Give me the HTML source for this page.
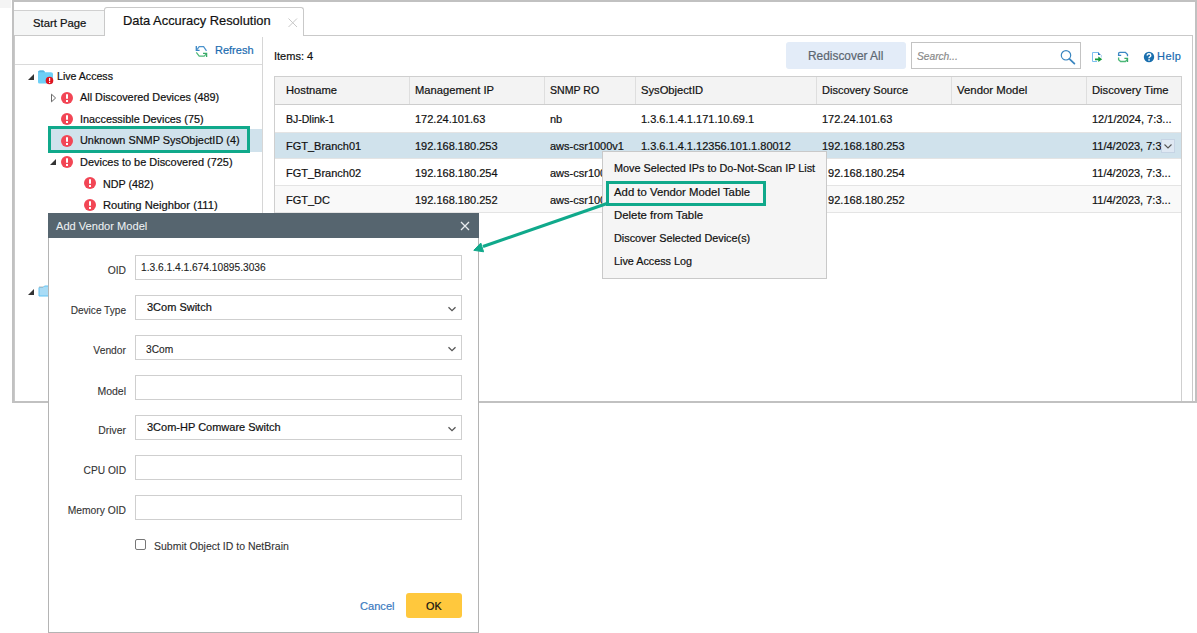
<!DOCTYPE html>
<html><head><meta charset="utf-8">
<style>
*{box-sizing:border-box;margin:0;padding:0}
html,body{width:1197px;height:633px;overflow:hidden;background:#fff}
body{position:relative;font-family:"Liberation Sans",sans-serif;font-size:11px;color:#111}
.a{position:absolute}
.t{position:absolute;white-space:nowrap;line-height:1;-webkit-text-stroke-width:0.2px}
.ex{position:absolute;width:12px;height:12px;border-radius:50%;background:#f24655}
.ex:before{content:"";position:absolute;left:5px;top:2px;width:2px;height:5px;background:#fff;border-radius:1px}
.ex:after{content:"";position:absolute;left:5px;top:8px;width:2px;height:2px;background:#fff}
.cd{position:absolute;top:77px;width:1px;height:27px;background:#dedede}
.rd{position:absolute;width:1px;height:27px;background:#efefef}
.hl{position:absolute;left:275px;width:906px;height:1px;background:#e4e4e4}
</style></head><body>
<div class="a" style="left:0;top:0;width:11px;height:8px;background:#f4f4f4"></div>
<!-- outer frame -->
<div class="a" style="left:12px;top:0;width:1185px;height:403px;border:2px solid #c1c1c1;background:#fff"></div>
<div class="a" style="left:14px;top:35px;width:1179px;height:1px;background:#c9c9c9"></div>
<div class="a" style="left:1192px;top:35px;width:1px;height:366px;background:#c9c9c9"></div>
<div class="a" style="left:14px;top:35px;width:1px;height:366px;background:#c9c9c9"></div>
<!-- tabs -->
<div class="a" style="left:14px;top:10px;width:90px;height:25px;background:#f5f6f6;border-top:1px solid #d0d0d0"></div>
<div class="t" style="left:33px;top:18px;font-size:11.3px;color:#111">Start Page</div>
<div class="a" style="left:104px;top:7px;width:200px;height:29px;background:#fff;border:1px solid #c9c9c9;border-bottom:none;border-radius:3px 3px 0 0"></div>
<div class="t" style="left:123px;top:15px;font-size:12.9px;color:#111">Data Accuracy Resolution</div>
<svg class="a" style="left:287px;top:17px" width="11" height="11" viewBox="0 0 11 11"><path d="M1.5 1.5L10 10M10 1.5L1.5 10" stroke="#c8c8c8" stroke-width="1"/></svg>

<!-- left panel -->
<div class="a" style="left:262px;top:37px;width:1px;height:364px;background:#d6d6d6"></div>
<div class="a" style="left:15px;top:64px;width:247px;height:1px;background:#dadada"></div>
<svg class="a" style="left:192px;top:42px" width="20" height="18" viewBox="0 0 20 18">
<path d="M4.3 4V8.3H7.6" fill="none" stroke="#3b86c4" stroke-width="1.3"/>
<path d="M5 7.6L7.2 4.6H11.6L14.5 8.9" fill="none" stroke="#4a92cc" stroke-width="1.2"/>
<path d="M4.3 10.4L7.2 14.1H12.2L14.5 11.6" fill="none" stroke="#4cb878" stroke-width="1.2"/>
<path d="M11 11.3H14.6V14.9" fill="none" stroke="#3aaa68" stroke-width="1.3"/>
</svg>
<div class="t" style="left:215px;top:45px;font-size:11px;color:#1a6bb0">Refresh</div>

<!-- tree -->
<svg class="a" style="left:28px;top:74px" width="6" height="6" viewBox="0 0 6 6"><path d="M6 0V6H0Z" fill="#333"/></svg>
<svg class="a" style="left:37px;top:69px" width="18" height="16" viewBox="0 0 18 16">
<path d="M1 3.5Q1 1.5 3 1.5H6Q7 1.5 7.5 2.5L8 3.2H14Q16 3.2 16 5V13Q16 14.5 14.5 14.5H2.5Q1 14.5 1 13Z" fill="#6dcff6"/>
<path d="M1 3.5Q1 1.5 3 1.5H6Q7 1.5 7.5 2.5L8 3.2H1Z" fill="#58b6e0"/>
<circle cx="12.5" cy="11.5" r="3.8" fill="#e0141e"/>
<rect x="12" y="9" width="1.2" height="3.2" fill="#fff"/>
<rect x="12" y="13" width="1.2" height="1" fill="#fff"/>
</svg>
<div class="t" style="left:57px;top:71px;font-size:10.6px">Live Access</div>

<svg class="a" style="left:50px;top:93px" width="8" height="10" viewBox="0 0 8 10"><path d="M1.5 1.2L5.6 5L1.5 8.8Z" fill="none" stroke="#6a6a6a" stroke-width="1" stroke-linejoin="miter"/></svg>
<div class="ex" style="left:61px;top:92px"></div>
<div class="t" style="left:80px;top:92px;font-size:10.85px">All Discovered Devices (489)</div>

<div class="ex" style="left:61px;top:113px"></div>
<div class="t" style="left:80px;top:114px;font-size:10.85px">Inaccessible Devices (75)</div>

<div class="a" style="left:48px;top:129px;width:214px;height:23px;background:#d0e2ec"></div>
<div class="ex" style="left:61px;top:135px"></div>
<div class="t" style="left:80px;top:135px;font-size:10.9px">Unknown SNMP SysObjectID (4)</div>

<svg class="a" style="left:50px;top:159px" width="6" height="6" viewBox="0 0 6 6"><path d="M6 0V6H0Z" fill="#333"/></svg>
<div class="ex" style="left:61px;top:156px"></div>
<div class="t" style="left:80px;top:157px;font-size:10.95px">Devices to be Discovered (725)</div>

<div class="ex" style="left:84px;top:177px"></div>
<div class="t" style="left:103px;top:179px;font-size:10.75px">NDP (482)</div>

<div class="ex" style="left:84px;top:199px"></div>
<div class="t" style="left:103px;top:200px;font-size:11.2px">Routing Neighbor (111)</div>

<svg class="a" style="left:28px;top:289px" width="6" height="6" viewBox="0 0 6 6"><path d="M6 0V6H0Z" fill="#333"/></svg>
<svg class="a" style="left:38px;top:285px" width="12" height="12" viewBox="0 0 12 12"><path d="M1 2.5H5L6.5 1H11V11H1Z" fill="#a9dcf6" stroke="#62c3f2" stroke-width="1"/><path d="M1 2.5H5L6 1.5H1Z" fill="#bbb"/></svg>

<!-- right toolbar -->
<div class="t" style="left:274px;top:51px;font-size:11px">Items: 4</div>
<div class="a" style="left:786px;top:42px;width:120px;height:27px;background:#e3ecf8;border-radius:3px"></div>
<div class="t" style="left:808px;top:51px;font-size:11.9px;color:#5c6670">Rediscover All</div>
<div class="a" style="left:911px;top:42px;width:170px;height:27px;border:1px solid #c3c3c3;background:#fff"></div>
<div class="t" style="left:917px;top:52px;font-size:10.2px;font-style:italic;color:#8a8a8a">Search...</div>
<svg class="a" style="left:1059px;top:48px" width="18" height="18" viewBox="0 0 18 18"><circle cx="7" cy="7.3" r="4.7" fill="none" stroke="#3a86c0" stroke-width="1.2"/><path d="M10.4 10.8L15.4 15.6" stroke="#3a86c0" stroke-width="1.8" stroke-linecap="round"/></svg>
<svg class="a" style="left:1086px;top:46px" width="22" height="20" viewBox="0 0 22 20"><path d="M12.5 6.5H6.5V15.5H11" fill="none" stroke="#7cbef0" stroke-width="1"/><path d="M12 6L14.9 8.9H12Z" fill="#2a74c0"/><path d="M15.3 9V11.5" stroke="#9ccaf0" stroke-width="0.9"/><path d="M9 12.4H12.3V10.6L16.2 13.3L12.3 16V14.2H9Z" fill="#159a3e"/></svg>
<svg class="a" style="left:1112px;top:48px" width="20" height="18" viewBox="0 0 20 18">
<path d="M9.2 7.3H6.6V5.6Q6.6 4.4 7.8 4.4H13.4L15.5 6.6V8.2" fill="none" stroke="#3b86c4" stroke-width="1.3"/>
<path d="M6.6 9.4V11.6L8.6 13.5H13.4L15.4 11.5" fill="none" stroke="#4cb878" stroke-width="1.3"/>
<path d="M12.4 10.3H15.5V14" fill="none" stroke="#3aaa68" stroke-width="1.3"/>
</svg>
<svg class="a" style="left:1143px;top:51px" width="12" height="12" viewBox="0 0 12 12"><circle cx="6" cy="6" r="5.2" fill="#1a6fae"/><path d="M4.2 4.6Q4.2 2.8 6 2.8Q7.8 2.8 7.8 4.4Q7.8 5.3 6.8 5.8Q6 6.2 6 7.2" fill="none" stroke="#fff" stroke-width="1.4"/><rect x="5.3" y="8.2" width="1.5" height="1.5" fill="#fff"/></svg>
<div class="t" style="left:1157px;top:51px;font-size:11px;letter-spacing:0.45px;color:#1a6bb0">Help</div>
<!-- table -->
<div class="a" style="left:274px;top:76px;width:908px;height:325px;border:1px solid #cfcfcf;border-bottom:none;background:#fff"></div>
<div class="a" style="left:275px;top:77px;width:906px;height:27px;background:#f3f3f3"></div>
<div class="a" style="left:275px;top:104px;width:906px;height:1px;background:#cdcdcd"></div>
<div class="cd" style="left:409px"></div>
<div class="cd" style="left:544px"></div>
<div class="cd" style="left:635px"></div>
<div class="cd" style="left:816px"></div>
<div class="cd" style="left:951px"></div>
<div class="cd" style="left:1086px"></div>
<div class="t" style="left:286px;top:85px;font-size:11.2px">Hostname</div>
<div class="t" style="left:415px;top:85px;font-size:11.2px">Management IP</div>
<div class="t" style="left:550px;top:85px;font-size:10.6px">SNMP RO</div>
<div class="t" style="left:641px;top:85px;font-size:11.2px">SysObjectID</div>
<div class="t" style="left:822px;top:85px;font-size:11px">Discovery Source</div>
<div class="t" style="left:957px;top:85px;font-size:11.4px">Vendor Model</div>
<div class="t" style="left:1092px;top:85px;font-size:11.2px">Discovery Time</div>
<div class="a" style="left:275px;top:133px;width:906px;height:25px;background:#d0e2ec"></div>
<div class="a" style="left:275px;top:186px;width:906px;height:26px;background:#f9f9f9"></div>
<div class="hl" style="top:132px"></div>
<div class="hl" style="top:158px"></div>
<div class="hl" style="top:185px"></div>
<div class="hl" style="top:212px"></div>
<div class="t" style="left:286px;top:114px;font-size:10.5px;overflow:hidden;width:121px;height:14px">BJ-Dlink-1</div>
<div class="t" style="left:415px;top:114px;font-size:11px;overflow:hidden;width:127px;height:14px">172.24.101.63</div>
<div class="t" style="left:550px;top:114px;font-size:11px;overflow:hidden;width:83px;height:14px">nb</div>
<div class="t" style="left:641px;top:114px;font-size:11px;overflow:hidden;width:173px;height:14px">1.3.6.1.4.1.171.10.69.1</div>
<div class="t" style="left:822px;top:114px;font-size:11px;overflow:hidden;width:127px;height:14px">172.24.101.63</div>
<div class="t" style="left:1092px;top:114px;font-size:11px;overflow:hidden;width:87px;height:14px">12/1/2024, 7:3...</div>
<div class="t" style="left:286px;top:141px;font-size:11px;overflow:hidden;width:121px;height:14px">FGT_Branch01</div>
<div class="t" style="left:415px;top:141px;font-size:11px;overflow:hidden;width:127px;height:14px">192.168.180.253</div>
<div class="t" style="left:550px;top:141px;font-size:11px;overflow:hidden;width:83px;height:14px">aws-csr1000v1</div>
<div class="t" style="left:641px;top:141px;font-size:11px;overflow:hidden;width:173px;height:14px">1.3.6.1.4.1.12356.101.1.80012</div>
<div class="t" style="left:822px;top:141px;font-size:11px;overflow:hidden;width:127px;height:14px">192.168.180.253</div>
<div class="t" style="left:1092px;top:141px;font-size:11px;overflow:hidden;width:87px;height:14px">11/4/2023, 7:3</div>
<div class="t" style="left:286px;top:168px;font-size:11px;overflow:hidden;width:121px;height:14px">FGT_Branch02</div>
<div class="t" style="left:415px;top:168px;font-size:11px;overflow:hidden;width:127px;height:14px">192.168.180.254</div>
<div class="t" style="left:550px;top:168px;font-size:11px;overflow:hidden;width:83px;height:14px">aws-csr1000v1</div>
<div class="t" style="left:641px;top:168px;font-size:11px;overflow:hidden;width:173px;height:14px">1.3.6.1.4.1.12356.101.1.80012</div>
<div class="t" style="left:822px;top:168px;font-size:11px;overflow:hidden;width:127px;height:14px">192.168.180.254</div>
<div class="t" style="left:1092px;top:168px;font-size:11px;overflow:hidden;width:87px;height:14px">11/4/2023, 7:3...</div>
<div class="t" style="left:286px;top:195px;font-size:11px;overflow:hidden;width:121px;height:14px">FGT_DC</div>
<div class="t" style="left:415px;top:195px;font-size:11px;overflow:hidden;width:127px;height:14px">192.168.180.252</div>
<div class="t" style="left:550px;top:195px;font-size:11px;overflow:hidden;width:83px;height:14px">aws-csr1000v1</div>
<div class="t" style="left:641px;top:195px;font-size:11px;overflow:hidden;width:173px;height:14px">1.3.6.1.4.1.12356.101.1.80011</div>
<div class="t" style="left:822px;top:195px;font-size:11px;overflow:hidden;width:127px;height:14px">192.168.180.252</div>
<div class="t" style="left:1092px;top:195px;font-size:11px;overflow:hidden;width:87px;height:14px">11/4/2023, 7:3...</div>
<div class="a" style="left:1161px;top:139px;width:14px;height:14px;background:#dfe8f3;border:1px solid #c6d4e4"></div>
<svg class="a" style="left:1163px;top:142px" width="10" height="8" viewBox="0 0 10 8"><path d="M1.5 2.5L5 6L8.5 2.5" fill="none" stroke="#555" stroke-width="1.1"/></svg>
<!-- context menu -->
<div class="a" style="left:827px;top:159px;width:1px;height:26px;background:#fff"></div>
<div class="a" style="left:827px;top:186px;width:1px;height:26px;background:#f9f9f9"></div>
<div class="a" style="left:602px;top:151px;width:225px;height:128px;background:#f5f5f5;border:1px solid #c9c9c9"></div>
<div class="t" style="left:614px;top:163px;font-size:10.85px">Move Selected IPs to Do-Not-Scan IP List</div>
<div class="t" style="left:614px;top:187px;font-size:11.35px">Add to Vendor Model Table</div>
<div class="t" style="left:614px;top:210px;font-size:11.4px">Delete from Table</div>
<div class="t" style="left:614px;top:233px;font-size:10.85px">Discover Selected Device(s)</div>
<div class="t" style="left:614px;top:256px;font-size:10.8px">Live Access Log</div>
<!-- green highlights -->
<div class="a" style="left:48px;top:126px;width:202px;height:27px;border:3px solid #10a98b"></div>
<div class="a" style="left:606px;top:181px;width:160px;height:25px;border:3px solid #10a98b"></div>
<svg class="a" style="left:0;top:0;z-index:5" width="1197" height="633" viewBox="0 0 1197 633"><path d="M607 203.5L483 246.5" stroke="#10a98b" stroke-width="3.2" fill="none"/><path d="M473.8 250.3L480.8 243L483.6 251.8Z" fill="#10a98b" stroke="#10a98b" stroke-width="1" stroke-linejoin="round"/></svg>
<!-- dialog -->
<div class="a" style="left:48px;top:213px;width:431px;height:420px;background:#fff;border:1px solid #b4b4b4;z-index:4"></div>
<div class="a" style="left:48px;top:213px;width:431px;height:25px;background:#56656f;z-index:4"></div>
<div class="t" style="left:56px;top:221px;font-size:11.1px;color:#eef2f4;-webkit-text-stroke-width:0.05px;z-index:4">Add Vendor Model</div>
<svg class="a" style="left:459px;top:220px;z-index:4" width="12" height="12" viewBox="0 0 12 12"><path d="M2 2L10 10M10 2L2 10" stroke="#e8ecef" stroke-width="1.3"/></svg>
<div class="t" style="right:1071px;top:266px;font-size:10.3px;color:#333;-webkit-text-stroke-width:0.1px;z-index:4">OID</div>
<div class="a" style="left:135px;top:255px;width:327px;height:25px;border:1px solid #cfcfcf;background:#fff;z-index:4"></div>
<div class="t" style="right:1071px;top:306px;font-size:10.1px;color:#333;-webkit-text-stroke-width:0.1px;z-index:4">Device Type</div>
<div class="a" style="left:135px;top:295px;width:327px;height:25px;border:1px solid #cfcfcf;background:#fff;z-index:4"></div>
<div class="t" style="right:1071px;top:346px;font-size:10.3px;color:#333;-webkit-text-stroke-width:0.1px;z-index:4">Vendor</div>
<div class="a" style="left:135px;top:335px;width:327px;height:25px;border:1px solid #cfcfcf;background:#fff;z-index:4"></div>
<div class="t" style="right:1071px;top:386px;font-size:10.5px;color:#333;-webkit-text-stroke-width:0.1px;z-index:4">Model</div>
<div class="a" style="left:135px;top:375px;width:327px;height:25px;border:1px solid #cfcfcf;background:#fff;z-index:4"></div>
<div class="t" style="right:1071px;top:426px;font-size:10.4px;color:#333;-webkit-text-stroke-width:0.1px;z-index:4">Driver</div>
<div class="a" style="left:135px;top:415px;width:327px;height:25px;border:1px solid #cfcfcf;background:#fff;z-index:4"></div>
<div class="t" style="right:1071px;top:466px;font-size:10.2px;color:#333;-webkit-text-stroke-width:0.1px;z-index:4">CPU OID</div>
<div class="a" style="left:135px;top:455px;width:327px;height:25px;border:1px solid #cfcfcf;background:#fff;z-index:4"></div>
<div class="t" style="right:1071px;top:506px;font-size:10.3px;color:#333;-webkit-text-stroke-width:0.1px;z-index:4">Memory OID</div>
<div class="a" style="left:135px;top:495px;width:327px;height:25px;border:1px solid #cfcfcf;background:#fff;z-index:4"></div>
<div class="t" style="left:141px;top:263px;font-size:10.2px;color:#222;-webkit-text-stroke-width:0.1px;z-index:4">1.3.6.1.4.1.674.10895.3036</div>
<div class="t" style="left:147px;top:302px;font-size:11.0px;color:#111;z-index:4">3Com Switch</div>
<div class="t" style="left:146px;top:345px;font-size:10.2px;color:#222;-webkit-text-stroke-width:0.1px;z-index:4">3Com</div>
<div class="t" style="left:147px;top:422px;font-size:11.0px;color:#111;z-index:4">3Com-HP Comware Switch</div>
<svg class="a" style="left:447px;top:306px;z-index:4" width="10" height="6" viewBox="0 0 10 6"><path d="M1.5 1.2L5 4.6L8.5 1.2" fill="none" stroke="#555" stroke-width="1.3"/></svg>
<svg class="a" style="left:447px;top:346px;z-index:4" width="10" height="6" viewBox="0 0 10 6"><path d="M1.5 1.2L5 4.6L8.5 1.2" fill="none" stroke="#555" stroke-width="1.3"/></svg>
<svg class="a" style="left:447px;top:426px;z-index:4" width="10" height="6" viewBox="0 0 10 6"><path d="M1.5 1.2L5 4.6L8.5 1.2" fill="none" stroke="#555" stroke-width="1.3"/></svg>
<div class="a" style="left:135px;top:539px;width:11px;height:11px;border:1px solid #777;border-radius:2px;background:#fff;z-index:4"></div>
<div class="t" style="left:154px;top:541px;font-size:10.5px;color:#333;-webkit-text-stroke-width:0.1px;z-index:4">Submit Object ID to NetBrain</div>
<div class="t" style="left:360px;top:601px;font-size:11.1px;color:#3b7bbf;z-index:4">Cancel</div>
<div class="a" style="left:406px;top:593px;width:56px;height:25px;background:#ffc83d;border-radius:3px;z-index:4"></div>
<div class="t" style="left:426px;top:601px;font-size:10.8px;color:#111;z-index:4">OK</div>
</body></html>
